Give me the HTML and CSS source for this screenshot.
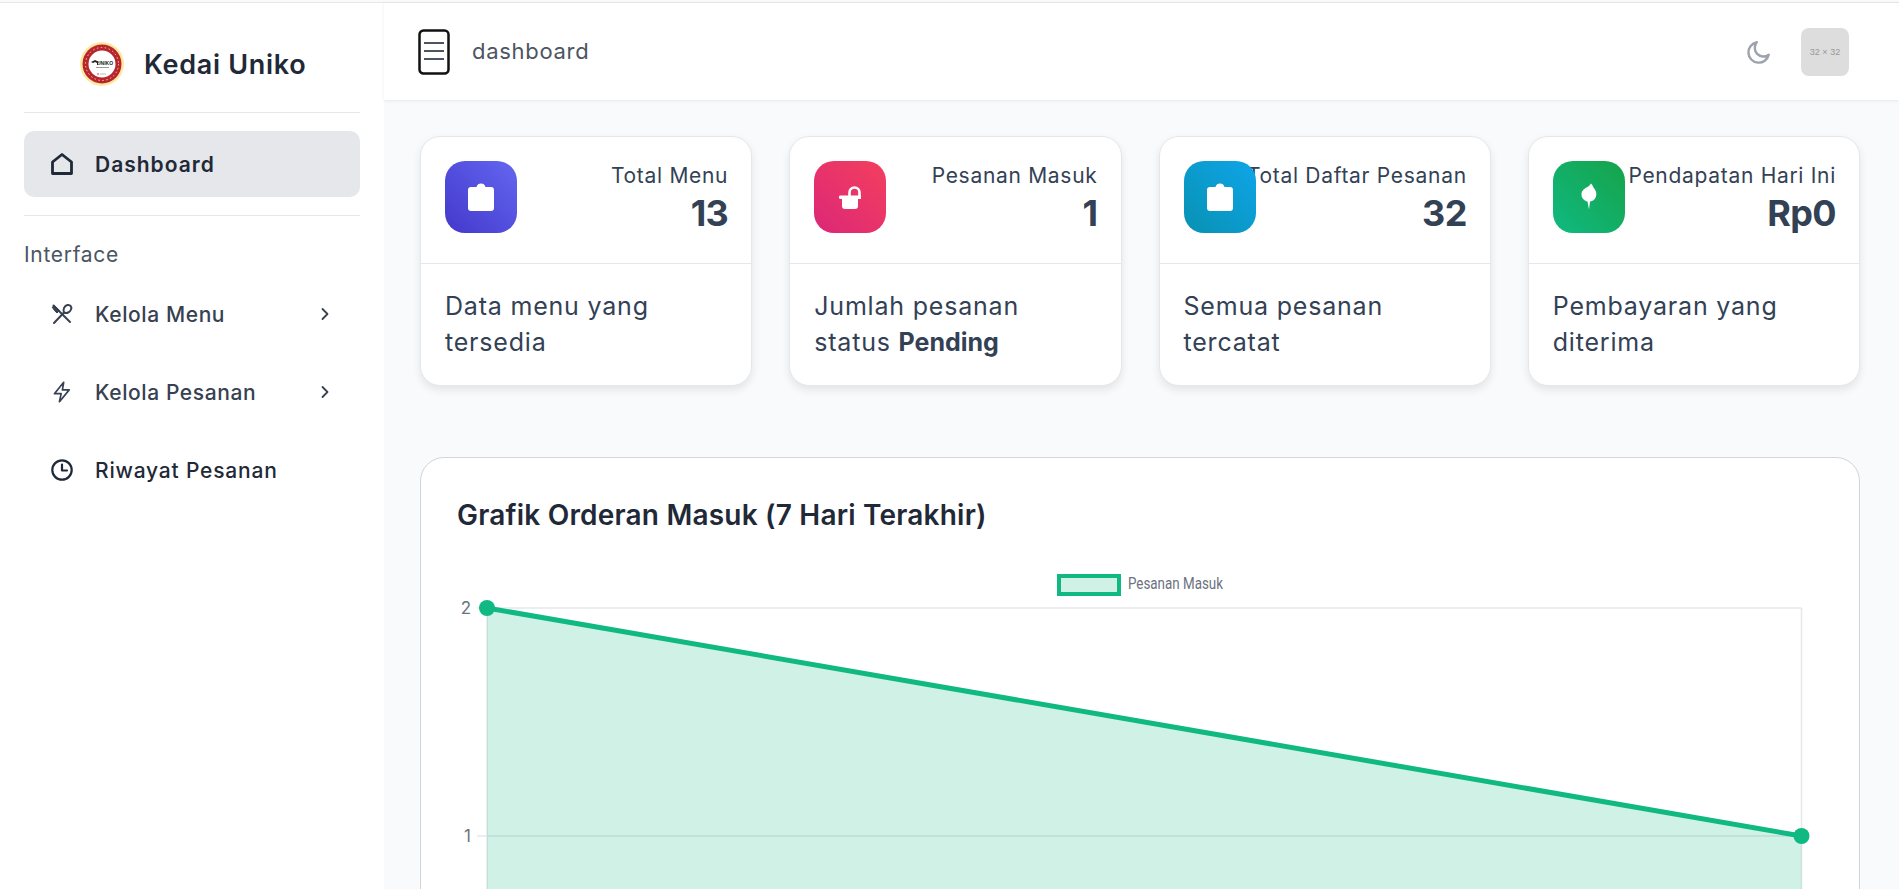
FILE: index.html
```html
<!DOCTYPE html>
<html lang="id">
<head>
<meta charset="utf-8">
<title>Kedai Uniko</title>
<link rel="stylesheet" href="styles.css">
</head>
<body>
<div class="app">
  <aside class="sidebar">
    <div class="brand">
      <svg class="brand-logo" viewBox="0 0 44 44">
        <circle cx="22" cy="22" r="22" fill="#fde9a0"/>
        <circle cx="22" cy="22" r="19.5" fill="#b9252d"/>
        <circle cx="22" cy="22" r="16.500" fill="none" stroke="#f0c9a0" stroke-width="1" stroke-dasharray="1.5 2.5"/>
        <circle cx="22" cy="22" r="13.500" fill="#fff"/>
        <path d="M11 20l4-2 4 2-1 1v2h-1v-2l-2-1-2 1z" fill="#222"/>
        <text x="25" y="23" class="logo-text">UNIKO</text>
        <rect x="16" y="25" width="13" height="1" fill="#999"/>
        <circle cx="18" cy="32" r="1.2" fill="#e8a0b0"/>
        <rect x="20" y="31.500" width="6" height="1" fill="#bbb"/>
      </svg>
      <span class="brand-name">Kedai Uniko</span>
    </div>
    <hr class="side-rule">
    <a class="nav-item nav-active">
      <svg class="nav-icon" viewBox="0 0 22 22"><path d="M1.500 9 11 1.500 20.500 9v11.500h-19z" fill="none" stroke="currentColor" stroke-width="2.800" stroke-linejoin="round"/></svg>
      <span>Dashboard</span>
    </a>
    <hr class="side-rule">
    <div class="nav-heading">Interface</div>
    <a class="nav-item">
      <svg class="nav-icon" viewBox="0 0 22 22" fill="none" stroke="currentColor" stroke-width="2" stroke-linecap="round" stroke-linejoin="round"><path d="M2.500 2.500 19 19"/><path d="M1.500 4.500 3 2l5.500 5.500-2.500 2.500c-2-1.500-3.500-3.500-4.500-5.500z" fill="currentColor" stroke-width="1"/><path d="M3 20 13 9.500"/><path d="M13 9.500c-1.500-3 .5-7 3.500-7.500 3-.5 4.500 2 3.500 4.500-1 2.500-4 4.500-7 3z"/></svg>
      <span>Kelola Menu</span>
      <svg class="nav-chevron" viewBox="0 0 10 14"><path d="M2.500 2 7.500 7l-5 5" fill="none" stroke="currentColor" stroke-width="1.800" stroke-linecap="round" stroke-linejoin="round"/></svg>
    </a>
    <a class="nav-item">
      <svg class="nav-icon" viewBox="0 0 22 26"><path d="M13 1.500 2 15h8l-2 9.500L19.500 10.500H11.500z" fill="none" stroke="currentColor" stroke-width="2" stroke-linejoin="round"/></svg>
      <span>Kelola Pesanan</span>
      <svg class="nav-chevron" viewBox="0 0 10 14"><path d="M2.500 2 7.500 7l-5 5" fill="none" stroke="currentColor" stroke-width="1.800" stroke-linecap="round" stroke-linejoin="round"/></svg>
    </a>
    <a class="nav-item nav-dark">
      <svg class="nav-icon" viewBox="0 0 22 22"><circle cx="11" cy="11" r="9.700" fill="none" stroke="currentColor" stroke-width="2.200"/><path d="M11 5.500V11.500H16" fill="none" stroke="currentColor" stroke-width="2.200" stroke-linecap="round" stroke-linejoin="round"/></svg>
      <span>Riwayat Pesanan</span>
    </a>
  </aside>

  <div class="main">
    <header class="topbar">
      <svg class="menu-icon" viewBox="0 0 32 46"><rect x="1.500" y="1.500" width="29" height="43" rx="4" fill="#fff" stroke="#111" stroke-width="2.500"/><path d="M6 14h20M6 22h20M6 30h20" stroke="#4b5563" stroke-width="2"/></svg>
      <span class="page-name">dashboard</span>
      <svg class="moon" viewBox="0 0 24 24"><path d="M21 14.500A9.500 9.500 0 1 1 10 3a8 8 0 0 0 11 11.500z" fill="none" stroke="#9ca3af" stroke-width="2.200" stroke-linejoin="round"/></svg>
      <div class="avatar">32 × 32</div>
    </header>

    <main class="content">
      <section class="stats">
        <article class="stat">
          <div class="stat-top">
            <div class="stat-icon grad-indigo"><svg viewBox="0 0 26 28"><path d="M8.500 4C9 1.500 11 .500 13 .500S17 1.500 17.500 4H23a3 3 0 0 1 3 3v18a3 3 0 0 1-3 3H3a3 3 0 0 1-3-3V7a3 3 0 0 1 3-3z" fill="#fff"/></svg></div>
            <div class="stat-figures"><div class="stat-label">Total Menu</div><div class="stat-value">13</div></div>
          </div>
          <p class="stat-note">Data menu yang tersedia</p>
        </article>
        <article class="stat">
          <div class="stat-top">
            <div class="stat-icon grad-pink"><svg class="icon-lock" viewBox="0 0 22 23"><path d="M10.500 11V6.500a5 5 0 0 1 10 0V11" fill="none" stroke="#fff" stroke-width="2.600"/><path d="M1.500 9.500H22v3.500h-3v7a3 3 0 0 1-3 3H6a3 3 0 0 1-3-3v-7H1.500a1.750 1.750 0 0 1 0-3.500z" fill="#fff"/></svg></div>
            <div class="stat-figures"><div class="stat-label">Pesanan Masuk</div><div class="stat-value">1</div></div>
          </div>
          <p class="stat-note">Jumlah pesanan status <b>Pending</b></p>
        </article>
        <article class="stat">
          <div class="stat-top">
            <div class="stat-icon grad-sky"><svg viewBox="0 0 26 28"><path d="M8.500 4C9 1.500 11 .500 13 .500S17 1.500 17.500 4H23a3 3 0 0 1 3 3v18a3 3 0 0 1-3 3H3a3 3 0 0 1-3-3V7a3 3 0 0 1 3-3z" fill="#fff"/></svg></div>
            <div class="stat-figures"><div class="stat-label">Total Daftar Pesanan</div><div class="stat-value">32</div></div>
          </div>
          <p class="stat-note">Semua pesanan tercatat</p>
        </article>
        <article class="stat">
          <div class="stat-top">
            <div class="stat-icon grad-green"><svg viewBox="0 0 26 28"><path d="M15 .5c1.500 1.500 2 3 2.500 4 2.500 3 3.500 6 2.500 9-1 3-3 4.500-6 5l-1 8-1.500-8c-3-.5-6-3-6-7 0-4 3-6 6-7.500 1.500-.7 2.500-2 3.500-3.500z" fill="#fff"/></svg></div>
            <div class="stat-figures"><div class="stat-label">Pendapatan Hari Ini</div><div class="stat-value">Rp0</div></div>
          </div>
          <p class="stat-note">Pembayaran yang diterima</p>
        </article>
      </section>

      <section class="chart-card">
        <h2 class="chart-title">Grafik Orderan Masuk (7 Hari Terakhir)</h2>
        <svg class="chart" viewBox="0 0 1438 400" preserveAspectRatio="xMinYMin">
          <rect x="637" y="5" width="60" height="18" fill="#d0f1e6" stroke="#10b981" stroke-width="4"/>
          <text x="706" y="18" class="legend" textLength="95" lengthAdjust="spacingAndGlyphs">Pesanan Masuk</text>
          <path d="M65 37V400M1379.500 37V400" stroke="#e5e7eb" stroke-width="1.500"/>
          <path d="M55 37H1379.500M55 265H1379.500" stroke="#e5e7eb" stroke-width="1.500"/>
          <path d="M65 37 1379.500 265V400H65z" fill="#10b981" fill-opacity=".2"/>
          <path d="M65 37 1379.500 265" stroke="#10b981" stroke-width="5" fill="none"/>
          <circle cx="65" cy="37" r="8" fill="#10b981"/>
          <circle cx="1379.500" cy="265" r="8" fill="#10b981"/>
          <text x="49" y="43" class="tick">2</text>
          <text x="49" y="271" class="tick">1</text>
        </svg>
      </section>
    </main>
  </div>
</div>
</body>
</html>
```

FILE: styles.css
```css
* { box-sizing: border-box; }
html, body { margin: 0; height: 100%; overflow: hidden; }
body {
  font-family: Inter, "Noto Sans", sans-serif;
  color: #334155;
  background: #f9fafb;
}
.app {
  display: flex;
  height: 889px;
  margin-top: 2px;
  border-top: 1px solid #e5e7eb;
}
.sidebar {
  flex: 0 0 384px;
  background: #fff;
  padding: 0 24px;
}
.brand {
  height: 109px;
  display: flex;
  align-items: center;
  gap: 20px;
  padding: 13px 0 0 56px;
}
.brand-logo { width: 44px; height: 44px; }
.logo-text { font: 700 5px "Liberation Sans", sans-serif; fill: #222; text-anchor: middle; }
.brand-name { font-size: 27px; font-weight: 600; color: #1f2937; letter-spacing: .7px; }
.side-rule { margin: 0; border: 0; border-top: 1px solid #e5e7eb; }
.nav-item {
  display: flex;
  align-items: center;
  height: 66px;
  margin-bottom: 12px;
  padding: 0 27px;
  gap: 22px;
  border-radius: 10px;
  font-size: 21px;
  letter-spacing: .6px;
  font-weight: 500;
  color: #374151;
}
.side-rule + .nav-item { margin: 18px 0; }
.nav-active { background: #e5e7eb; color: #1f2937; font-weight: 600; letter-spacing: 1px; }
.nav-dark { color: #1f2937; letter-spacing: .8px; }
.nav-icon { flex: 0 0 22px; width: 22px; height: 22px; }
.nav-chevron { width: 10px; height: 14px; margin-left: auto; margin-right: 3px; }
.nav-heading { height: 65px; padding-top: 25px; font-size: 21px; letter-spacing: .7px; color: #4b5563; line-height: 28px; }

.main { flex: 1; min-width: 0; display: flex; flex-direction: column; }
.topbar {
  flex: 0 0 97px;
  display: flex;
  align-items: center;
  padding: 0 50px 0 34px;
  background: #fff;
  box-shadow: 0 1px 3px rgba(0, 0, 0, .08);
}
.menu-icon { width: 32px; height: 46px; }
.page-name { margin: 0 0 2px 22px; font-size: 22px; color: #4b5563; letter-spacing: .7px; }
.moon { width: 26px; height: 26px; margin-left: auto; margin-right: 29px; }
.avatar {
  width: 48px;
  height: 48px;
  border-radius: 8px;
  background: #ddd;
  color: #999;
  font: 9px/48px "Liberation Sans", sans-serif;
  text-align: center;
}
.content { flex: 1; padding: 36px 39px 0 36px; overflow: hidden; }
.stats {
  display: grid;
  grid-template-columns: repeat(4, minmax(0, 1fr));
  gap: 37px;
}
.stat {
  height: 250px;
  background: #fff;
  border: 1px solid #e5e7eb;
  border-radius: 20px;
  box-shadow: 0 4px 8px rgba(0, 0, 0, .09);
}
.stat-top {
  height: 127px;
  padding: 24px 23px 0 24px;
  display: flex;
  justify-content: space-between;
  border-bottom: 1px solid #e5e7eb;
}
.stat-icon {
  position: relative;
  z-index: 1;
  flex: 0 0 72px;
  height: 72px;
  border-radius: 20px;
  display: flex;
  align-items: center;
  justify-content: center;
}
.stat-icon svg { width: 26px; height: 28px; }
.stat-icon .icon-lock { width: 22px; height: 23px; }
.grad-indigo { background: linear-gradient(to top right, #4338ca, #6366f1); }
.grad-pink { background: linear-gradient(to top right, #db2777, #f43f5e); }
.grad-sky { background: linear-gradient(to top right, #0891b2, #0ea5e9); }
.grad-green { background: linear-gradient(to top right, #10b981, #16a34a); }
.stat-figures { min-width: 0; display: flex; flex-direction: column; align-items: flex-end; }
.stat-label { white-space: nowrap; font-size: 21px; line-height: 28px; letter-spacing: .7px; margin-top: 1px; }
.stat-value { font-size: 36px; font-weight: 700; line-height: 46px; letter-spacing: -.6px; }
.stat-note { margin: 24px 24px 0; font-size: 25px; line-height: 36px; letter-spacing: .8px; }
.stat-note b { font-weight: 700; letter-spacing: 0; }

.chart-card {
  margin-top: 71px;
  height: 700px;
  background: #fff;
  border: 1px solid #d1d5db;
  border-radius: 24px;
  padding: 36px 0 0;
}
.chart-title { margin: 0 0 0 36px; font-size: 28px; line-height: 42px; font-weight: 600; letter-spacing: .2px; color: #1f2937; }
.chart { display: block; width: 1438px; height: 400px; margin: 35px 0 0 1px; }
.legend { font: 16px Roboto, sans-serif; fill: #6b7280; }
.tick { font: 17px Inter, sans-serif; fill: #6b7280; text-anchor: end; }
```
